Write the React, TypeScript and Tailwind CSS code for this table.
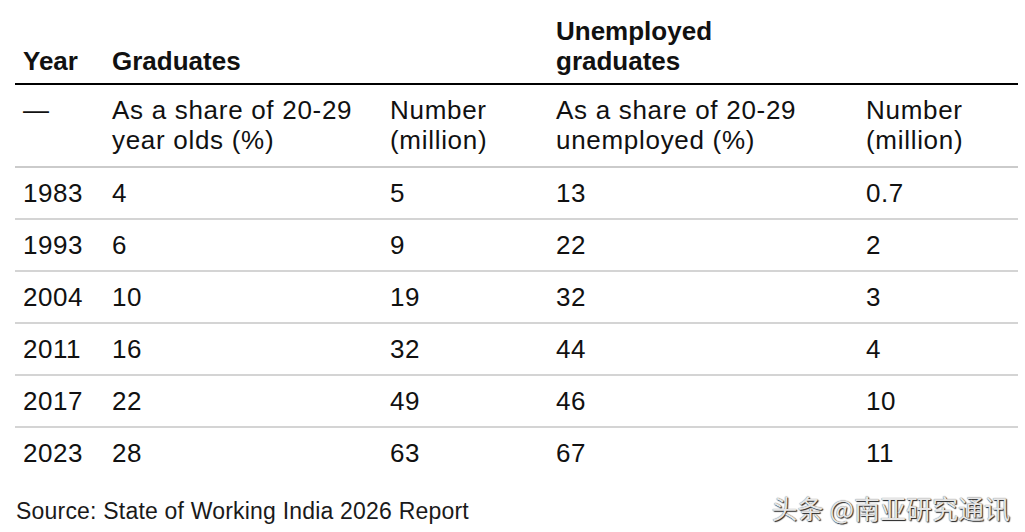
const rows = [
  { year: "1983", share: "4", number: "5", unShare: "13", unNumber: "0.7" },
  { year: "1993", share: "6", number: "9", unShare: "22", unNumber: "2" },
  { year: "2004", share: "10", number: "19", unShare: "32", unNumber: "3" },
  { year: "2011", share: "16", number: "32", unShare: "44", unNumber: "4" },
  { year: "2017", share: "22", number: "49", unShare: "46", unNumber: "10" },
  { year: "2023", share: "28", number: "63", unShare: "67", unNumber: "11" },
];

const cols = "grid grid-cols-[97px_278px_166px_310px_1fr]";

export default function App() {
  return (
    <div
      className="w-[1025px] h-[532px] bg-white text-[#111] overflow-hidden"
      style={{ fontFamily: '"Liberation Sans", Arial, sans-serif' }}
    >
      <div className="ml-[15px] w-[1003px]">
        {/* Top header */}
        <div className={`${cols} border-b-2 border-black pt-[16px] pb-[7px] text-[26px] leading-[30px] font-bold items-end`}>
          <div className="pl-[8px]">Year</div>
          <div className="col-span-2">Graduates</div>
          <div className="col-span-2">
            Unemployed
            <br />
            graduates
          </div>
        </div>

        {/* Sub header */}
        <div className={`${cols} border-b-2 border-[#cbcbcb] pt-[10px] pb-[11px] text-[26px] leading-[30px] tracking-[0.7px]`}>
          <div className="pl-[8px]">—</div>
          <div>
            As a share of 20-29
            <br />
            year olds (%)
          </div>
          <div>
            Number
            <br />
            (million)
          </div>
          <div>
            As a share of 20-29
            <br />
            unemployed (%)
          </div>
          <div>
            Number
            <br />
            (million)
          </div>
        </div>

        {/* Data rows */}
        {rows.map((r, i) => (
          <div
            key={r.year}
            className={`${cols} pt-[10px] pb-[10px] text-[26px] leading-[30px] tracking-[0.5px] ${
              i < rows.length - 1 ? "border-b-2 border-[#d4d4d4]" : ""
            }`}
          >
            <div className="pl-[8px]">{r.year}</div>
            <div>{r.share}</div>
            <div>{r.number}</div>
            <div>{r.unShare}</div>
            <div>{r.unNumber}</div>
          </div>
        ))}
      </div>

      {/* Footer */}
      <div className="flex items-baseline justify-between mt-[16px] pl-[16px] pr-[15px]">
        <div className="text-[23px] leading-[28px] tracking-[0.2px] text-[#1a1a1a]">
          Source: State of Working India 2026 Report
        </div>
        <div
          className="text-[26px] leading-[28px] text-[#e6e6e6] [text-shadow:1px_1px_1px_#222,0_0_1px_#555]"
          style={{ fontFamily: '"Noto Sans CJK SC", "Noto Sans", sans-serif' }}
        >
          头条 @南亚研究通讯
        </div>
      </div>
    </div>
  );
}
